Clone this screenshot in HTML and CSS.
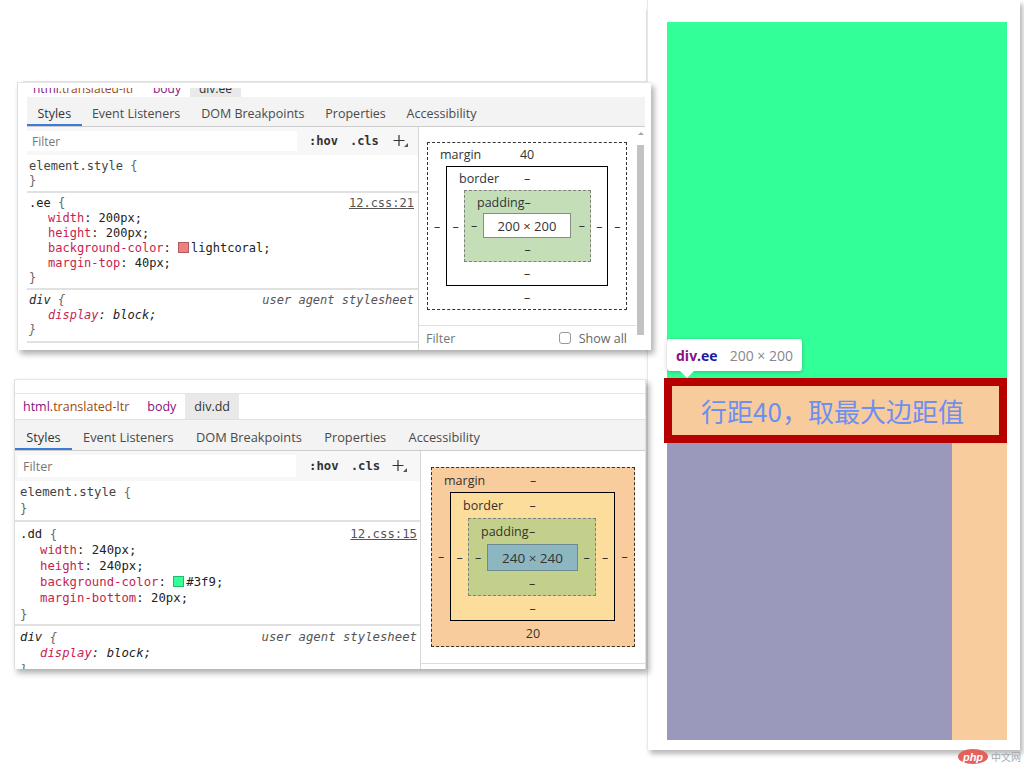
FILE: index.html
```html
<!DOCTYPE html>
<html lang="zh-CN">
<head>
<meta charset="utf-8">
<title>margin 合并示例</title>
<link rel="stylesheet" href="styles.css">
</head>
<body>
<div class="canvas">
  <div class="backdrop"></div>

  <section class="card">
    <div class="demo">
      <div class="blk-dd"></div>
      <div class="blk-ee"><span>行距40，取最大边距值</span></div>
      <div class="blk-row"><div class="blk-purple"></div><div class="blk-peach"></div></div>
    </div>
    <div class="tip"><b class="tip-tag">div</b><b class="tip-cls">.ee</b><span class="tip-size">200 × 200</span></div>
  </section>

  <section class="shot shot-top">
    <div class="crumbs crumbs-cut">
      <div class="crumbs-in">
        <span class="crumb"><span class="c-tag">html</span><span class="c-cls">.translated-ltr</span></span>
        <span class="crumb"><span class="c-tag">body</span></span>
        <span class="crumb crumb-on">div.ee</span>
      </div>
    </div>
    <nav class="tabs">
      <span class="tab on">Styles</span><span class="tab">Event Listeners</span><span class="tab">DOM Breakpoints</span><span class="tab">Properties</span><span class="tab">Accessibility</span>
    </nav>
    <div class="pane-row">
      <div class="styles">
        <div class="toolbar">
          <div class="filter">Filter</div>
          <span class="tb tb-hov">:hov</span>
          <span class="tb tb-cls">.cls</span>
          <svg class="tb-plus" width="16" height="14" viewBox="0 0 16 14"><path d="M6 1v11M0.5 6.5h11" stroke="#333" stroke-width="1.2" fill="none"/><path d="M15 9v4h-4z" fill="#555"/></svg>
        </div>
        <div class="rule rule-el">
          <div class="ln"><span class="sel sel-el">element.style</span> <span class="br">{</span></div>
          <div class="ln"><span class="br">}</span></div>
        </div>
        <div class="rule rule-main">
          <div class="ln head"><span><span class="sel">.ee</span> <span class="br">{</span></span><span class="src">12.css:21</span></div>
          <div class="ln prop"><span class="pn">width</span>: <span class="pv">200px</span>;</div>
          <div class="ln prop"><span class="pn">height</span>: <span class="pv">200px</span>;</div>
          <div class="ln prop"><span class="pn">background-color</span>: <span class="sw sw-coral"></span><span class="pv">lightcoral</span>;</div>
          <div class="ln prop"><span class="pn">margin-top</span>: <span class="pv">40px</span>;</div>
          <div class="ln"><span class="br">}</span></div>
        </div>
        <div class="rule rule-ua">
          <div class="ln head"><span><span class="sel">div</span> <span class="br">{</span></span><span class="ua-src">user agent stylesheet</span></div>
          <div class="ln prop"><span class="pn">display</span>: <span class="pv">block</span>;</div>
          <div class="ln"><span class="br">}</span></div>
        </div>
      </div>
      <div class="boxpane">
        <div class="bm m">
          <div class="bm-top"><span class="bm-lab">margin</span><span class="bm-v">40</span></div>
          <span class="bm-s">–</span>
          <div class="bm b">
            <div class="bm-top"><span class="bm-lab">border</span><span class="bm-v">–</span></div>
            <span class="bm-s">–</span>
            <div class="bm p">
              <div class="bm-top"><span class="bm-lab">padding</span><span class="bm-v">–</span></div>
              <span class="bm-s">–</span>
              <div class="bm-c">200 × 200</div>
              <span class="bm-s">–</span>
              <div class="bm-bot">–</div>
            </div>
            <span class="bm-s">–</span>
            <div class="bm-bot">–</div>
          </div>
          <span class="bm-s">–</span>
          <div class="bm-bot">–</div>
        </div>
        <div class="bp-filter">
          <span class="bp-ph">Filter</span>
          <span class="bp-show"><span class="chk"></span>Show all</span>
        </div>
      </div>
      <div class="scroll"><span class="sc-up"></span><span class="sc-thumb"></span></div>
    </div>
  </section>

  <section class="shot shot-bottom">
    <div class="strip"></div>
    <div class="crumbs">
      <div class="crumbs-in">
        <span class="crumb"><span class="c-tag">html</span><span class="c-cls">.translated-ltr</span></span>
        <span class="crumb"><span class="c-tag">body</span></span>
        <span class="crumb crumb-on">div.dd</span>
      </div>
    </div>
    <nav class="tabs">
      <span class="tab on">Styles</span><span class="tab">Event Listeners</span><span class="tab">DOM Breakpoints</span><span class="tab">Properties</span><span class="tab">Accessibility</span>
    </nav>
    <div class="pane-row">
      <div class="styles">
        <div class="toolbar">
          <div class="filter">Filter</div>
          <span class="tb tb-hov">:hov</span>
          <span class="tb tb-cls">.cls</span>
          <svg class="tb-plus" width="16" height="14" viewBox="0 0 16 14"><path d="M6 1v11M0.5 6.5h11" stroke="#333" stroke-width="1.2" fill="none"/><path d="M15 9v4h-4z" fill="#555"/></svg>
        </div>
        <div class="rule rule-el">
          <div class="ln"><span class="sel sel-el">element.style</span> <span class="br">{</span></div>
          <div class="ln"><span class="br">}</span></div>
        </div>
        <div class="rule rule-main">
          <div class="ln head"><span><span class="sel">.dd</span> <span class="br">{</span></span><span class="src">12.css:15</span></div>
          <div class="ln prop"><span class="pn">width</span>: <span class="pv">240px</span>;</div>
          <div class="ln prop"><span class="pn">height</span>: <span class="pv">240px</span>;</div>
          <div class="ln prop"><span class="pn">background-color</span>: <span class="sw sw-green"></span><span class="pv">#3f9</span>;</div>
          <div class="ln prop"><span class="pn">margin-bottom</span>: <span class="pv">20px</span>;</div>
          <div class="ln"><span class="br">}</span></div>
        </div>
        <div class="rule rule-ua">
          <div class="ln head"><span><span class="sel">div</span> <span class="br">{</span></span><span class="ua-src">user agent stylesheet</span></div>
          <div class="ln prop"><span class="pn">display</span>: <span class="pv">block</span>;</div>
          <div class="ln"><span class="br">}</span></div>
        </div>
      </div>
      <div class="boxpane">
        <div class="bm m">
          <div class="bm-top"><span class="bm-lab">margin</span><span class="bm-v">–</span></div>
          <span class="bm-s">–</span>
          <div class="bm b">
            <div class="bm-top"><span class="bm-lab">border</span><span class="bm-v">–</span></div>
            <span class="bm-s">–</span>
            <div class="bm p">
              <div class="bm-top"><span class="bm-lab">padding</span><span class="bm-v">–</span></div>
              <span class="bm-s">–</span>
              <div class="bm-c">240 × 240</div>
              <span class="bm-s">–</span>
              <div class="bm-bot">–</div>
            </div>
            <span class="bm-s">–</span>
            <div class="bm-bot">–</div>
          </div>
          <span class="bm-s">–</span>
          <div class="bm-bot">20</div>
        </div>
        <div class="bp-filter bp-cut"></div>
      </div>
    </div>
  </section>

  <div class="watermark"><span class="php">php</span><span class="cn">中文网</span></div>
</div>
</body>
</html>
```

FILE: styles.css
```css
* { box-sizing: border-box; margin: 0; padding: 0; }
html, body { width: 1024px; height: 768px; background: #fff; overflow: hidden; }
body { font-family: "Open Sans", "Noto Sans", sans-serif; font-size: 12px; color: #333; }

.canvas { position: relative; width: 1024px; height: 768px; }

.backdrop {
  position: absolute; left: 23px; top: 10px; width: 624px; height: 72px;
  border-right: 1px solid #e6e6e6; border-bottom: 1px solid #e6e6e6;
}

/* ---------- right card (rendered page) ---------- */
.card {
  position: absolute; left: 647px; top: 0; width: 373px; height: 750px;
  background: #fff; border-left: 1px solid #e8e8e8;
  box-shadow: 3px 4px 5px rgba(0,0,0,.28);
  padding: 22px 13px 0 19px;
}
.demo { display: flex; flex-direction: column; width: 340px; }
.blk-dd { height: 356px; background: #33ff99; }
.blk-ee {
  height: 65px; margin-left: -3px; border: 8px solid #b70000; background: #f8cb9c;
  display: flex; align-items: center; justify-content: center;
  font-family: "Noto Sans CJK SC", sans-serif; font-size: 26px; color: #6d8ff1;
  padding-right: 6px;
}
.blk-row { display: flex; height: 297px; }
.blk-purple { width: 285px; background: #9a99bb; }
.blk-peach { flex: 1; background: #f8cc9c; }

.tip {
  position: absolute; left: 19px; top: 339px; height: 32px; padding: 0 9px;
  display: flex; align-items: center; background: #fff; border-radius: 3px;
  box-shadow: 0 1px 4px rgba(0,0,0,.22); font-size: 14px; white-space: nowrap;
}
.tip::after {
  content: ""; position: absolute; left: 13px; top: 100%;
  border-left: 7px solid transparent; border-right: 7px solid transparent; border-top: 7px solid #fff;
}
.tip-tag { color: #881280; }
.tip-cls { color: #1a1aa6; }
.tip-size { color: #888; margin-left: 12px; }

/* ---------- devtools screenshots ---------- */
.shot {
  position: absolute; background: #fff; overflow: hidden;
  box-shadow: 3px 4px 6px rgba(0,0,0,.32);
  display: flex; flex-direction: column;
}
.shot-top {
  left: 17px; top: 82px; width: 634px; height: 268px;
  border-left: 1px solid #dedede; border-top: 1px solid #e6e6e6;
  padding: 5px 6px 0 9px;
  --ui: 12px; --tabfs: 12.5px; --mono: 12px; --lh: 15px; --tabpad: 10.4px;
}
.shot-bottom {
  left: 14px; top: 379px; width: 632px; height: 290px;
  border-left: 1px solid #dedede; border-top: 1px solid #e6e6e6; border-right: 1px solid #e0e0e0;
  --ui: 12.5px; --tabfs: 12.8px; --mono: 12.3px; --lh: 16px; --tabpad: 11.2px;
}

.strip { height: 14px; border-bottom: 1px solid #e3e3e3; flex: none; }

.crumbs { flex: none; font-size: var(--ui); overflow: hidden; }
.shot-bottom .crumbs { height: 26px; border-bottom: 1px solid #e0e0e0; }
.crumbs-cut { height: 9px; }
.crumbs-in { display: flex; height: 100%; align-items: stretch; white-space: nowrap; }
.crumbs-cut .crumbs-in { height: 20px; line-height: 20px; margin-top: -9px; margin-left: -3px; }
.shot-bottom .crumbs-in { margin-left: -1px; }
.crumb { display: flex; align-items: center; padding: 0 9px; }
.crumb-on { background: #e9e9e9; color: #333; }
.c-tag { color: #881280; }
.c-cls { color: #9b4a12; }

.tabs {
  flex: none; display: flex; background: #f3f3f3; border-bottom: 1px solid #cdcdcd;
  font-size: var(--tabfs); white-space: nowrap; padding-top: 3px;
}
.shot-top .tabs { height: 30px; }
.shot-bottom .tabs { height: 31px; }
.tab { display: flex; align-items: center; padding: 0 var(--tabpad); color: #4a4a4a; margin-top: -3px; padding-top: 3px; }
.tab.on { color: #333; box-shadow: inset 0 -2px 0 #3a7bd5; }

.pane-row { flex: 1; display: flex; min-height: 0; }
.styles { font-family: "DejaVu Sans Mono", "Liberation Mono", monospace; font-size: var(--mono); color: #222; overflow: hidden; }
.shot-top .styles { width: 391px; }
.shot-bottom .styles { width: 405px; }

.toolbar {
  display: flex; background: #f7f7f7; padding-top: 4px; align-items: flex-start;
  font-family: "DejaVu Sans Mono", monospace;
}
.shot-top .toolbar { height: 28px; }
.shot-bottom .toolbar { height: 30px; }
.filter {
  background: #fff; color: #777; font-family: "Open Sans", sans-serif; font-size: var(--ui);
  display: flex; align-items: center; padding-left: 5px;
}
.shot-top .filter { width: 270px; height: 20px; }
.shot-bottom .filter { width: 278px; height: 22px; margin-left: 3px; }
.tb { font-weight: bold; color: #333; line-height: 20px; }
.shot-bottom .tb { line-height: 22px; }
.tb-hov { margin-left: 12px; }
.tb-cls { margin-left: 12px; }
.tb-plus { margin-left: 14px; margin-top: 3px; }
.shot-bottom .tb-hov { margin-left: 13px; }
.shot-bottom .tb-plus { margin-left: 12px; margin-top: 4px; }

.rule { border-bottom: 2px solid #e1e1e1; }
.shot-top .rule { padding-left: 2px; padding-right: 4px; }
.shot-bottom .rule { padding-left: 5px; padding-right: 3px; }
.shot-top .rule-el { padding-top: 4px; padding-bottom: 2px; }
.shot-top .rule-main { padding-top: 3px; padding-bottom: 2px; }
.shot-top .rule-ua { padding-top: 3px; padding-bottom: 3px; }
.shot-bottom .rule-el { padding-top: 3px; padding-bottom: 4px; }
.shot-bottom .rule-main { padding-top: 4px; padding-bottom: 2px; }
.shot-bottom .rule-ua { padding-top: 3px; padding-bottom: 3px; }

.ln { height: var(--lh); line-height: var(--lh); white-space: nowrap; }
.head { display: flex; justify-content: space-between; }
.prop { padding-left: 19px; }
.shot-bottom .prop { padding-left: 20px; }
.sel-el { color: #444; }
.br { color: #666; }
.pn { color: #c81d4e; }
.pv { color: #222; }
.src { color: #555; text-decoration: underline; }
.rule-ua .ln { font-style: italic; }
.ua-src { color: #555; }
.sw {
  display: inline-block; width: 11px; height: 11px; margin-right: 2px; vertical-align: -1px;
  border: 1px solid rgba(0,0,0,.28);
}
.sw-coral { background: #f08080; }
.sw-green { background: #33ff99; }

/* box model pane */
.boxpane {
  display: flex; flex-direction: column; border-left: 1px solid #d6d6d6;
  font-size: 12.5px; color: #333; white-space: nowrap;
}
.shot-top .boxpane { width: 218px; padding: 15px 0 0 8px; }
.shot-bottom .boxpane { width: 225px; padding: 16px 0 0 10px; }

.bm {
  display: grid;
  grid-template-columns: var(--l) auto var(--r);
  grid-template-rows: var(--t) auto var(--b);
  align-self: flex-start;
}
.bm-top {
  grid-column: 1 / -1; display: grid; align-items: center;
  grid-template-columns: minmax(0, 1fr) auto minmax(0, 1fr);
}
.bm-lab { justify-self: start; padding-left: 12px; overflow: visible; }
.bm-v { text-align: center; }
.bm-s { align-self: center; justify-self: center; }
.bm-bot { grid-column: 1 / -1; display: flex; align-items: center; justify-content: center; }
.bm-c { display: flex; align-items: center; justify-content: center; }

.m { border: 1px dashed #333; }
.b { border: 1px solid #000; }
.p { border: 1px dashed #808080; }

.shot-top .m { --l: 18px; --r: 18px; --t: 23px; --b: 23px; }
.shot-top .b { --l: 17px; --r: 16px; --t: 23px; --b: 23px; }
.shot-top .p { --l: 18px; --r: 17px; --t: 22px; --b: 23px; background: #c4dfb7; }
.shot-top .bm-c { width: 88px; height: 25px; background: #fff; border: 1px solid #8a8a8a; font-size: 13px; }

.shot-bottom .m { --l: 18px; --r: 19px; --t: 24px; --b: 25px; background: #f9cc9d; }
.shot-bottom .b { --l: 17px; --r: 18px; --t: 25px; --b: 24px; background: #fddd9b; }
.shot-bottom .p { --l: 18px; --r: 17px; --t: 25px; --b: 24px; background: #c3d08b; }
.shot-bottom .bm-c { width: 91px; height: 27px; background: #8cb6c0; border: 1px solid #6d8a92; font-size: 13.5px; }

.bp-filter {
  margin-top: auto; height: 25px; border-top: 1px solid #e0e0e0;
  display: flex; align-items: center; justify-content: space-between;
  padding: 0 9px 0 0; color: #777;
}
.shot-top .bp-filter { margin-left: -8px; padding-left: 7px; }
.bp-ph { color: #777; }
.bp-show { display: flex; align-items: center; color: #666; }
.chk { width: 12px; height: 12px; border: 1px solid #9a9a9a; border-radius: 3px; margin-right: 8px; background: #fff; }
.bp-cut { height: 6px; margin-left: -10px; border-top: 1px solid #dcdcdc; }

.scroll { width: 9px; position: relative; background: #fff; }
.sc-up {
  position: absolute; left: 2px; top: 5px;
  border-left: 3px solid transparent; border-right: 3px solid transparent; border-bottom: 3px solid #a8a8a8;
}
.sc-thumb { position: absolute; left: 1px; right: 1px; top: 18px; bottom: 15px; background: #c2c2c2; }

/* watermark */
.watermark {
  position: absolute; left: 958px; top: 749px; display: flex; align-items: center; gap: 3px;
}
.php {
  display: flex; align-items: center; justify-content: center;
  width: 30px; height: 15px; border-radius: 50%; background: #e4605c; color: #fff;
  font-family: "Liberation Sans", sans-serif; font-size: 11px; font-style: italic; font-weight: bold;
}
.cn { font-family: "Noto Sans CJK SC", sans-serif; font-size: 10px; color: #a9a9a9; }
```
